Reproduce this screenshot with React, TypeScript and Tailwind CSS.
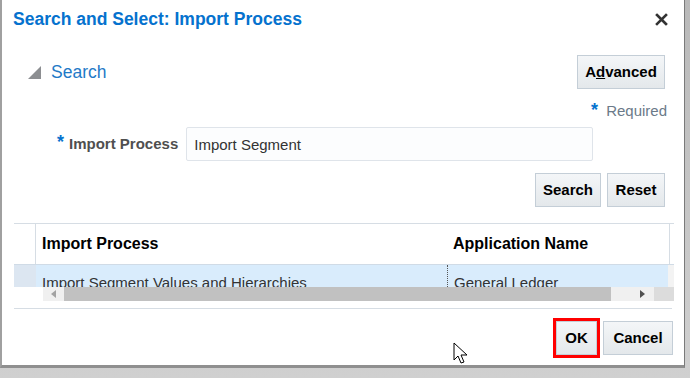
import { useState } from "react";

const Btn = ({ children, className = "" }: { children: React.ReactNode; className?: string }) => (
  <button
    className={
      "h-[34px] border border-[#c4ced7] bg-gradient-to-b from-[#f4f6f8] to-[#e4e8eb] text-[15px] font-bold text-[#000] " +
      className
    }
  >
    {children}
  </button>
);

const App = () => {
  const [value, setValue] = useState("Import Segment");

  return (
    <div className="w-[690px] h-[378px] bg-gradient-to-b from-[#b9b9b9] to-[#d0d0d0] font-['Liberation_Sans',Arial,sans-serif]">
      <div className="w-[685px] h-[368px] bg-white border-l-2 border-[#a0a0a0] border-b-[3px] border-b-[#8f8f8f] border-r-[1px] border-r-[#7a7a7a] flex flex-col">
        {/* header */}
        <div className="h-[38px] flex items-center justify-between pl-[11px] pr-[16px]">
          <h1 className="text-[17.5px] font-bold text-[#0572ce]">Search and Select: Import Process</h1>
          <svg width="13" height="13" viewBox="0 0 13 13">
            <path d="M2 2 L11 11 M11 2 L2 11" stroke="#333" strokeWidth="2.6" strokeLinecap="square" />
          </svg>
        </div>

        {/* search header */}
        <div className="mt-[17px] h-[34px] flex items-center justify-between pl-[26px] pr-[19px]">
          <div className="flex items-center gap-[10px]">
            <svg width="13" height="13" viewBox="0 0 13 13">
              <polygon points="13,0 13,13 0,13" fill="#8c8e91" />
            </svg>
            <span className="text-[17.5px] text-[#1f7ac7]">Search</span>
          </div>
          <Btn className="w-[88px]">
            A<span className="underline">d</span>vanced
          </Btn>
        </div>

        <div className="mt-[13px] h-[18px] flex items-center justify-end pr-[17px] text-[15px]">
          <span className="text-[#0572ce] font-bold text-[18px] leading-none mr-[8px] -mt-[2px]">*</span>
          <span className="text-[#6b7a89]">Required</span>
        </div>

        {/* form row */}
        <div className="mt-[7px] h-[34px] flex items-center pl-[55px]">
          <span className="text-[#0572ce] font-bold text-[18px] leading-none mr-[5px] -mt-[4px]">*</span>
          <span className="text-[15px] font-bold text-[#4f4f4f] mr-[8px]">Import Process</span>
          <input
            value={value}
            onChange={(e) => setValue(e.target.value)}
            className="w-[407px] h-[34px] border border-[#dfe4ea] rounded-[2px] bg-[#fcfdfe] px-[7px] text-[15px] text-[#333] outline-none"
          />
        </div>

        <div className="mt-[12px] flex justify-end gap-[6px] pr-[19px]">
          <Btn className="w-[66px]">Search</Btn>
          <Btn className="w-[58px]">Reset</Btn>
        </div>

        {/* table */}
        <div className="mt-[16px] ml-[12px] w-[660px] border-t border-[#d6dde4]">
          <div className="flex h-[40px]">
            <div className="w-[22px] border-r border-[#d6dde4]" />
            <div className="w-[411px] flex items-center pl-[6px] text-[16px] font-bold text-[#000]">Import Process</div>
            <div className="flex-1 flex items-center pl-[6px] text-[16px] font-bold text-[#000] border-r border-[#d6dde4] mr-[4px]">
              Application Name
            </div>
          </div>
          <div className="relative h-[37px] overflow-hidden">
            <div className="flex h-[23px] border-t border-[#d0dbe6]">
              <div className="w-[22px] bg-[#dce6f1]" />
              <div className="w-[411px] bg-[#d9ecfc] pl-[6px] pt-[10px] text-[15px] text-[#333] leading-none whitespace-nowrap">
                Import Segment Values and Hierarchies
              </div>
              <div className="w-[221px] bg-[#d9ecfc] border-l border-dotted border-[#555] pl-[6px] pt-[10px] text-[15px] text-[#333] leading-none whitespace-nowrap">
                General Ledger
              </div>
              <div className="flex-1 bg-[#f3f3f3]" />
            </div>
            <div className="flex h-[14px]">
              <div className="w-[29px]" />
              <div className="w-[21px] bg-[#f0f0f0] flex items-center justify-center">
                <svg width="5" height="8" viewBox="0 0 5 8">
                  <polygon points="5,0 5,8 0,4" fill="#a3a3a3" />
                </svg>
              </div>
              <div className="w-[548px] bg-[#c1c1c1]" />
              <div className="w-[43px] bg-[#f0f0f0] flex items-center justify-end pr-[9px]">
                <svg width="5" height="8" viewBox="0 0 5 8">
                  <polygon points="0,0 0,8 5,4" fill="#505050" />
                </svg>
              </div>
              <div className="w-[20px] bg-[#dcdcdc]" />
            </div>
          </div>
        </div>
        <div className="mt-[7px] ml-[12px] w-[658px] border-t border-[#d6dde4]" />

        {/* footer */}
        <div className="relative mt-[9px] flex justify-end items-center gap-[3px] pr-[11px]">
          <div className="border-[3px] border-[#f00] p-0">
            <Btn className="w-[41px] h-[34px]">OK</Btn>
          </div>
          <Btn className="w-[70px] h-[34px]">Cancel</Btn>
          <svg width="18" height="24" viewBox="0 0 18 24" className="absolute left-[451px] top-[24px]">
            <path
              d="M1 1 L1 18 L5 14 L8 21 L11 20 L8 13 L14 13 Z"
              fill="#fff"
              stroke="#000"
              strokeWidth="1"
              strokeLinejoin="round"
            />
          </svg>
        </div>
      </div>
    </div>
  );
};

export default App;
